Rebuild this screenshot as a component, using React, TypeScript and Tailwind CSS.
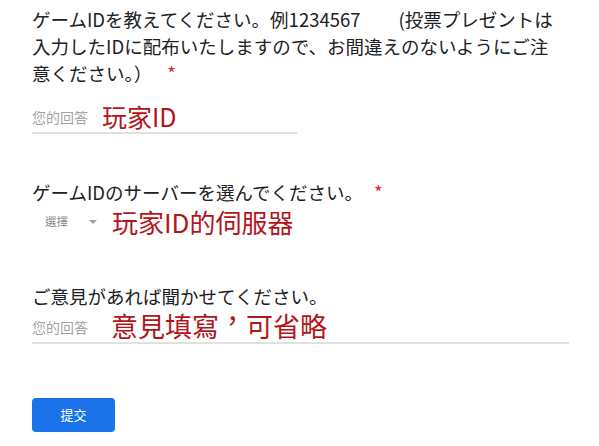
import React from "react";

const jp = "font-['Noto_Sans_CJK_JP','Noto_Sans_CJK_TC',sans-serif]";
const tc = "font-['Noto_Sans_CJK_TC','Noto_Sans_CJK_JP',sans-serif]";

function Star({ gap }: { gap: string }) {
  return <span className={`${gap} text-[#d93025]`}>*</span>;
}

export default function App() {
  return (
    <div className={`w-[599px] h-[446px] bg-white pl-[32px] text-[#202124] ${jp}`}>
      {/* question 1 */}
      <div className="pt-[6px] text-[18.5px] leading-[27px]">
        <div className="flex whitespace-nowrap">
          <span>ゲームIDを教えてください。例1234567</span>
          <span className="ml-[38px]">(投票プレゼントは</span>
        </div>
        <div className="whitespace-nowrap">入力したIDに配布いたしますので、お間違えのないようにご注</div>
        <div className="whitespace-nowrap">
          意ください。）
          <Star gap="ml-[15px]" />
        </div>
      </div>

      <div className={`mt-[14px] flex w-[265px] items-end border-b-2 border-[#e0e0e0] pb-[1px] ${tc}`}>
        <span className="mb-[6px] text-[14px] leading-[16px] text-[#a3a3a3]">您的回答</span>
        <span className="ml-[14px] text-[25px] leading-[30px] text-[#b3141b]">玩家ID</span>
      </div>

      {/* question 2 */}
      <div className="mt-[45px] whitespace-nowrap text-[18.5px] leading-[27px]">
        ゲームIDのサーバーを選んでください。
        <Star gap="ml-[11px]" />
      </div>
      <div className={`mt-[1px] flex items-center pl-[13px] ${tc}`}>
        <span className="text-[11.5px] text-[#8a8a8a]">選擇</span>
        <span className="ml-[21px] h-0 w-0 border-x-[4px] border-t-[4px] border-x-transparent border-t-[#a0a0a0]" />
        <span className="ml-[15px] text-[26px] leading-[30px] text-[#b3141b]">玩家ID的伺服器</span>
      </div>

      {/* question 3 */}
      <div className="mt-[46px] whitespace-nowrap text-[18.5px] leading-[27px]">
        ご意見があれば聞かせてください。
      </div>
      <div className={`flex w-[537px] items-end border-b-2 border-[#e0e0e0] pb-[1px] ${tc}`}>
        <span className="mb-[6px] text-[14px] leading-[16px] text-[#a3a3a3]">您的回答</span>
        <span className="ml-[23px] text-[27px] leading-[31px] text-[#b3141b]">
          意見填寫<span className="inline-block -translate-y-[6px]">，</span>可省略
        </span>
      </div>

      <button className={`mt-[54px] flex h-[34px] w-[83px] items-center justify-center rounded-[4px] bg-[#1a73e8] text-[13px] text-white ${tc}`}>
        提交
      </button>
    </div>
  );
}
